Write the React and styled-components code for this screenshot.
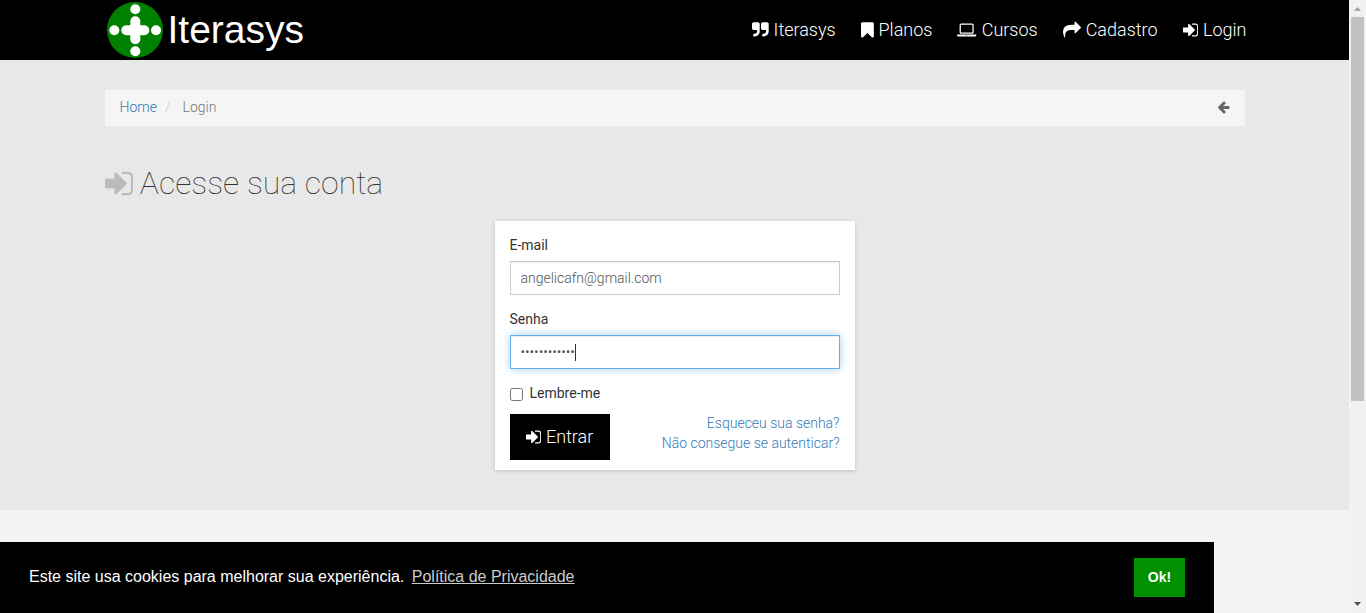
import React from 'react';
import styled, { createGlobalStyle } from 'styled-components';

const GlobalStyle = createGlobalStyle`
  *, *::before, *::after { box-sizing: border-box; }
  body {
    margin: 0;
    background: #f3f3f3;
    color: #333;
    font-family: Roboto, "Liberation Sans", sans-serif;
    font-size: 14px;
    font-weight: 300;
    line-height: 20px;
  }
  a { color: #337ab7; text-decoration: none; }
`;

const glyphs = {
  quote: {
    box: '64 0 1664 1792',
    d: 'M832 320v704q0 104-40.5 198.5t-109.5 163.5-163.5 109.5-198.5 40.5h-64q-26 0-45-19t-19-45v-128q0-26 19-45t45-19h64q106 0 181-75t75-181v-32q0-40-28-68t-68-28h-224q-80 0-136-56t-56-136v-384q0-80 56-136t136-56h384q80 0 136 56t56 136zm896 0v704q0 104-40.5 198.5t-109.5 163.5-163.5 109.5-198.5 40.5h-64q-26 0-45-19t-19-45v-128q0-26 19-45t45-19h64q106 0 181-75t75-181v-32q0-40-28-68t-68-28h-224q-80 0-136-56t-56-136v-384q0-80 56-136t136-56h384q80 0 136 56t56 136z',
  },
  bookmark: {
    box: '256 0 1280 1792',
    d: 'M1420 128q23 0 44 9 33 13 52.5 41t19.5 62v1289q0 34-19.5 62t-52.5 41q-19 8-44 8-48 0-83-32l-441-424-441 424q-36 33-83 33-23 0-44-9-33-13-52.5-41t-19.5-62v-1289q0-34 19.5-62t52.5-41q21-9 44-9h1048z',
  },
  laptop: {
    box: '0 0 1920 1792',
    d: 'M416 1280q-66 0-113-47t-47-113v-704q0-66 47-113t113-47h1088q66 0 113 47t47 113v704q0 66-47 113t-113 47h-1088zm-32-864v704q0 13 9.5 22.5t22.5 9.5h1088q13 0 22.5-9.5t9.5-22.5v-704q0-13-9.5-22.5t-22.5-9.5h-1088q-13 0-22.5 9.5t-9.5 22.5zm1376 928h160v96q0 40-47 68t-113 28h-1600q-66 0-113-28t-47-68v-96h1760zm-720 96q16 0 16-16t-16-16h-160q-16 0-16 16t16 16h160z',
  },
  share: {
    box: '0 0 1792 1792',
    d: 'M1792 640q0 26-19 45l-512 512q-19 19-45 19t-45-19-19-45v-256h-224q-98 0-175.5 6t-154 21.5-133 42.5-105.5 69.5-80 101-48.5 138.5-17.5 181q0 55 5 123 0 6 2.5 23.5t2.5 26.5q0 15-8.5 25t-23.5 10q-16 0-28-17-7-9-13-22t-13.5-30-10.5-24q-127-285-127-451 0-199 53-333 162-403 875-403h224v-256q0-26 19-45t45-19 45 19l512 512q19 19 19 45z',
  },
  signIn: {
    box: '128 0 1536 1792',
    d: 'M1312 896q0 26-19 45l-544 544q-19 19-45 19t-45-19-19-45v-288h-448q-26 0-45-19t-19-45v-384q0-26 19-45t45-19h448v-288q0-26 19-45t45-19 45 19l544 544q19 19 19 45zm352-352v704q0 119-84.5 203.5t-203.5 84.5h-320q-13 0-22.5-9.5t-9.5-22.5q0-4-1-20t-.5-26.5 3-23.5 10-19.5 20.5-6.5h320q66 0 113-47t47-113v-704q0-66-47-113t-113-47h-312l-11.5-1-11.5-3-8-5.5-7-9-2-13.5q0-4-1-20t-.5-26.5 3-23.5 10-19.5 20.5-6.5h320q119 0 203.5 84.5t84.5 203.5z',
  },
  back: {
    box: '64 0 1664 1792',
    d: 'M1664 896v128q0 53-32.5 90.5t-84.5 37.5h-704l293 294q38 36 38 90t-38 90l-75 76q-37 37-90 37-52 0-91-37l-651-652q-37-37-37-90 0-52 37-91l651-650q38-38 91-38 52 0 90 38l75 74q38 38 38 91t-38 91l-293 293h704q52 0 84.5 37.5t32.5 90.5z',
  },
};

const Glyph = styled.svg`
  display: block;
  flex: none;
  height: ${(p) => p.$size}px;
  width: auto;
  fill: currentColor;
`;

const Icon = ({ name, size = 18 }) => (
  <Glyph $size={size} viewBox={glyphs[name].box} aria-hidden="true">
    <path d={glyphs[name].d} />
  </Glyph>
);

const Shell = styled.div`
  display: flex;
  height: 100vh;
  overflow: hidden;
`;

const Page = styled.div`
  position: relative;
  flex: 1;
  min-width: 0;
  overflow: hidden;
`;

const Container = styled.div`
  max-width: 1170px;
  margin: 0 auto;
  padding: 0 15px;
`;

const Header = styled.header`
  background: #000;
`;

const HeaderRow = styled(Container)`
  display: flex;
  justify-content: space-between;
  align-items: center;
  height: 60px;
  padding: 0 13px 0 17px;
`;

const Brand = styled.a`
  display: flex;
  align-items: center;
  gap: 5px;
  color: #fff;
  font: 400 39px/60px "Liberation Sans", Arial, sans-serif;
`;

const Nav = styled.nav`
  display: flex;
  gap: 25px;
`;

const NavLink = styled.a`
  display: flex;
  align-items: center;
  gap: 5px;
  color: #fff;
  font-size: 18px;
  line-height: 20px;
`;

const Main = styled.main`
  background: #e8e8e8;
  padding: 30px 0 40px;
`;

const Breadcrumb = styled.nav`
  display: flex;
  align-items: center;
  padding: 7px 15px 9px;
  background: #f5f5f5;
  color: #777;
`;

const Slash = styled.span`
  padding: 0 12px 0 8px;
  color: #ccc;
`;

const BackLink = styled.a`
  margin-left: auto;
  color: #666;
`;

const Title = styled.h1`
  display: flex;
  align-items: center;
  gap: 7px;
  margin: 37px 0 18px;
  font-size: 32px;
  font-weight: 100;
  line-height: 40px;

  svg { color: #bbb; }
`;

const Card = styled.form`
  width: 360px;
  max-width: 100%;
  margin: 0 auto;
  padding: 14px 15px 10px;
  background: #fff;
  box-shadow: 0 1px 4px rgba(0, 0, 0, 0.18);
`;

const Field = styled.div`
  position: relative;
  margin-bottom: 14px;
`;

const Label = styled.label`
  display: block;
  margin-bottom: 6px;
  font-weight: 400;
`;

const Input = styled.input`
  display: block;
  width: 100%;
  height: 34px;
  padding: 6px 10px;
  border: 1px solid ${(p) => (p.$active ? '#66afe9' : '#ccc')};
  border-radius: 0;
  outline: 0;
  background: #fff;
  color: #555;
  font: inherit;
  caret-color: transparent;
  box-shadow: inset 0 1px 1px rgba(0, 0, 0, 0.075)
    ${(p) => (p.$active ? ', 0 0 8px rgba(102, 175, 233, 0.6)' : '')};
`;

const Caret = styled.span`
  position: absolute;
  left: 65px;
  bottom: 8px;
  width: 1px;
  height: 17px;
  background: #333;
`;

const Remember = styled.label`
  display: flex;
  align-items: center;
  gap: 7px;
  margin-bottom: 10px;
  font-weight: 400;

  input { width: 13px; height: 13px; margin: 2px 0 0; }
`;

const Actions = styled.div`
  display: flex;
  justify-content: space-between;
  align-items: flex-start;
`;

const Submit = styled.button`
  display: flex;
  align-items: center;
  gap: 5px;
  height: 46px;
  margin-top: 1px;
  padding: 0 17px 0 16px;
  border: 0;
  background: #000;
  color: #fff;
  font: inherit;
  font-size: 18px;
`;

const Help = styled.div`
  display: flex;
  flex-direction: column;
  align-items: flex-end;
`;

const CookieBar = styled.div`
  position: absolute;
  left: 0;
  bottom: 0;
  display: flex;
  align-items: center;
  justify-content: space-between;
  width: 90%;
  padding: 16px 29px;
  background: #000;
  color: #fff;
  font: 400 16px/24px "Liberation Sans", Arial, sans-serif;
`;

const CookieText = styled.span`
  padding-bottom: 2px;

  a { margin-left: 3px; color: #ccc; text-decoration: underline; }
`;

const CookieButton = styled.button`
  height: 39px;
  padding: 0 14px 2px;
  border: 0;
  background: #009000;
  color: #fff;
  font: 700 14px/24px "Liberation Sans", Arial, sans-serif;
`;

const ScrollTrack = styled.div`
  display: flex;
  flex-direction: column;
  align-items: center;
  width: 17px;
  background: #f1f1f1;
`;

const ScrollThumb = styled.div`
  width: 13px;
  height: calc(63% - 2px);
  background: #c1c1c1;
`;

const ScrollArrow = styled.svg`
  flex: none;
  display: block;
  width: 17px;
  height: 17px;
  margin-top: ${(p) => (p.$end ? 'auto' : 0)};
  fill: ${(p) => (p.$end ? '#505050' : '#a3a3a3')};
`;

const links = [
  ['quote', 'Iterasys'],
  ['bookmark', 'Planos'],
  ['laptop', 'Cursos'],
  ['share', 'Cadastro'],
  ['signIn', 'Login'],
];

export default function App() {
  return (
    <Shell>
      <GlobalStyle />
      <Page>
        <Header>
          <HeaderRow>
            <Brand href="#">
              <svg width="56" height="56" viewBox="0 0 56 56" aria-hidden="true">
                <circle cx="28" cy="28" r="28" fill="#008000" />
                <g fill="#fff">
                  <circle cx="28.300" cy="7.200" r="5" />
                  <circle cx="28.300" cy="49.200" r="5" />
                  <circle cx="7.300" cy="28.200" r="5" />
                  <circle cx="49" cy="28.200" r="5" />
                  <rect x="14.300" y="23.200" width="28" height="10" rx="5" />
                  <rect x="23.300" y="14.200" width="10" height="28" rx="5" />
                </g>
              </svg>
              <span>Iterasys</span>
            </Brand>
            <Nav>
              {links.map(([icon, text]) => (
                <NavLink href="#" key={text}>
                  <Icon name={icon} />
                  {text}
                </NavLink>
              ))}
            </Nav>
          </HeaderRow>
        </Header>
        <Main>
          <Container>
            <Breadcrumb>
              <a href="#">Home</a>
              <Slash>/</Slash>
              <span>Login</span>
              <BackLink href="#" aria-label="Voltar">
                <Icon name="back" size={14} />
              </BackLink>
            </Breadcrumb>
            <Title>
              <Icon name="signIn" size={33} />
              Acesse sua conta
            </Title>
            <Card onSubmit={(e) => e.preventDefault()}>
              <Field>
                <Label htmlFor="email">E-mail</Label>
                <Input id="email" type="email" defaultValue="angelicafn@gmail.com" />
              </Field>
              <Field>
                <Label htmlFor="senha">Senha</Label>
                <Input id="senha" type="password" defaultValue="abcdefghijkl" $active />
                <Caret />
              </Field>
              <Remember>
                <input type="checkbox" />
                Lembre-me
              </Remember>
              <Actions>
                <Submit type="submit">
                  <Icon name="signIn" />
                  Entrar
                </Submit>
                <Help>
                  <a href="#">Esqueceu sua senha?</a>
                  <a href="#">Não consegue se autenticar?</a>
                </Help>
              </Actions>
            </Card>
          </Container>
        </Main>
        <CookieBar role="dialog" aria-label="Cookies">
          <CookieText>
            Este site usa cookies para melhorar sua experiência. <a href="#">Política de Privacidade</a>
          </CookieText>
          <CookieButton type="button">Ok!</CookieButton>
        </CookieBar>
      </Page>
      <ScrollTrack aria-hidden="true">
        <ScrollArrow viewBox="0 0 17 17">
          <path d="M5 11h7L8.500 7z" />
        </ScrollArrow>
        <ScrollThumb />
        <ScrollArrow viewBox="0 0 17 17" $end>
          <path d="M5 6h7L8.500 10z" />
        </ScrollArrow>
      </ScrollTrack>
    </Shell>
  );
}
